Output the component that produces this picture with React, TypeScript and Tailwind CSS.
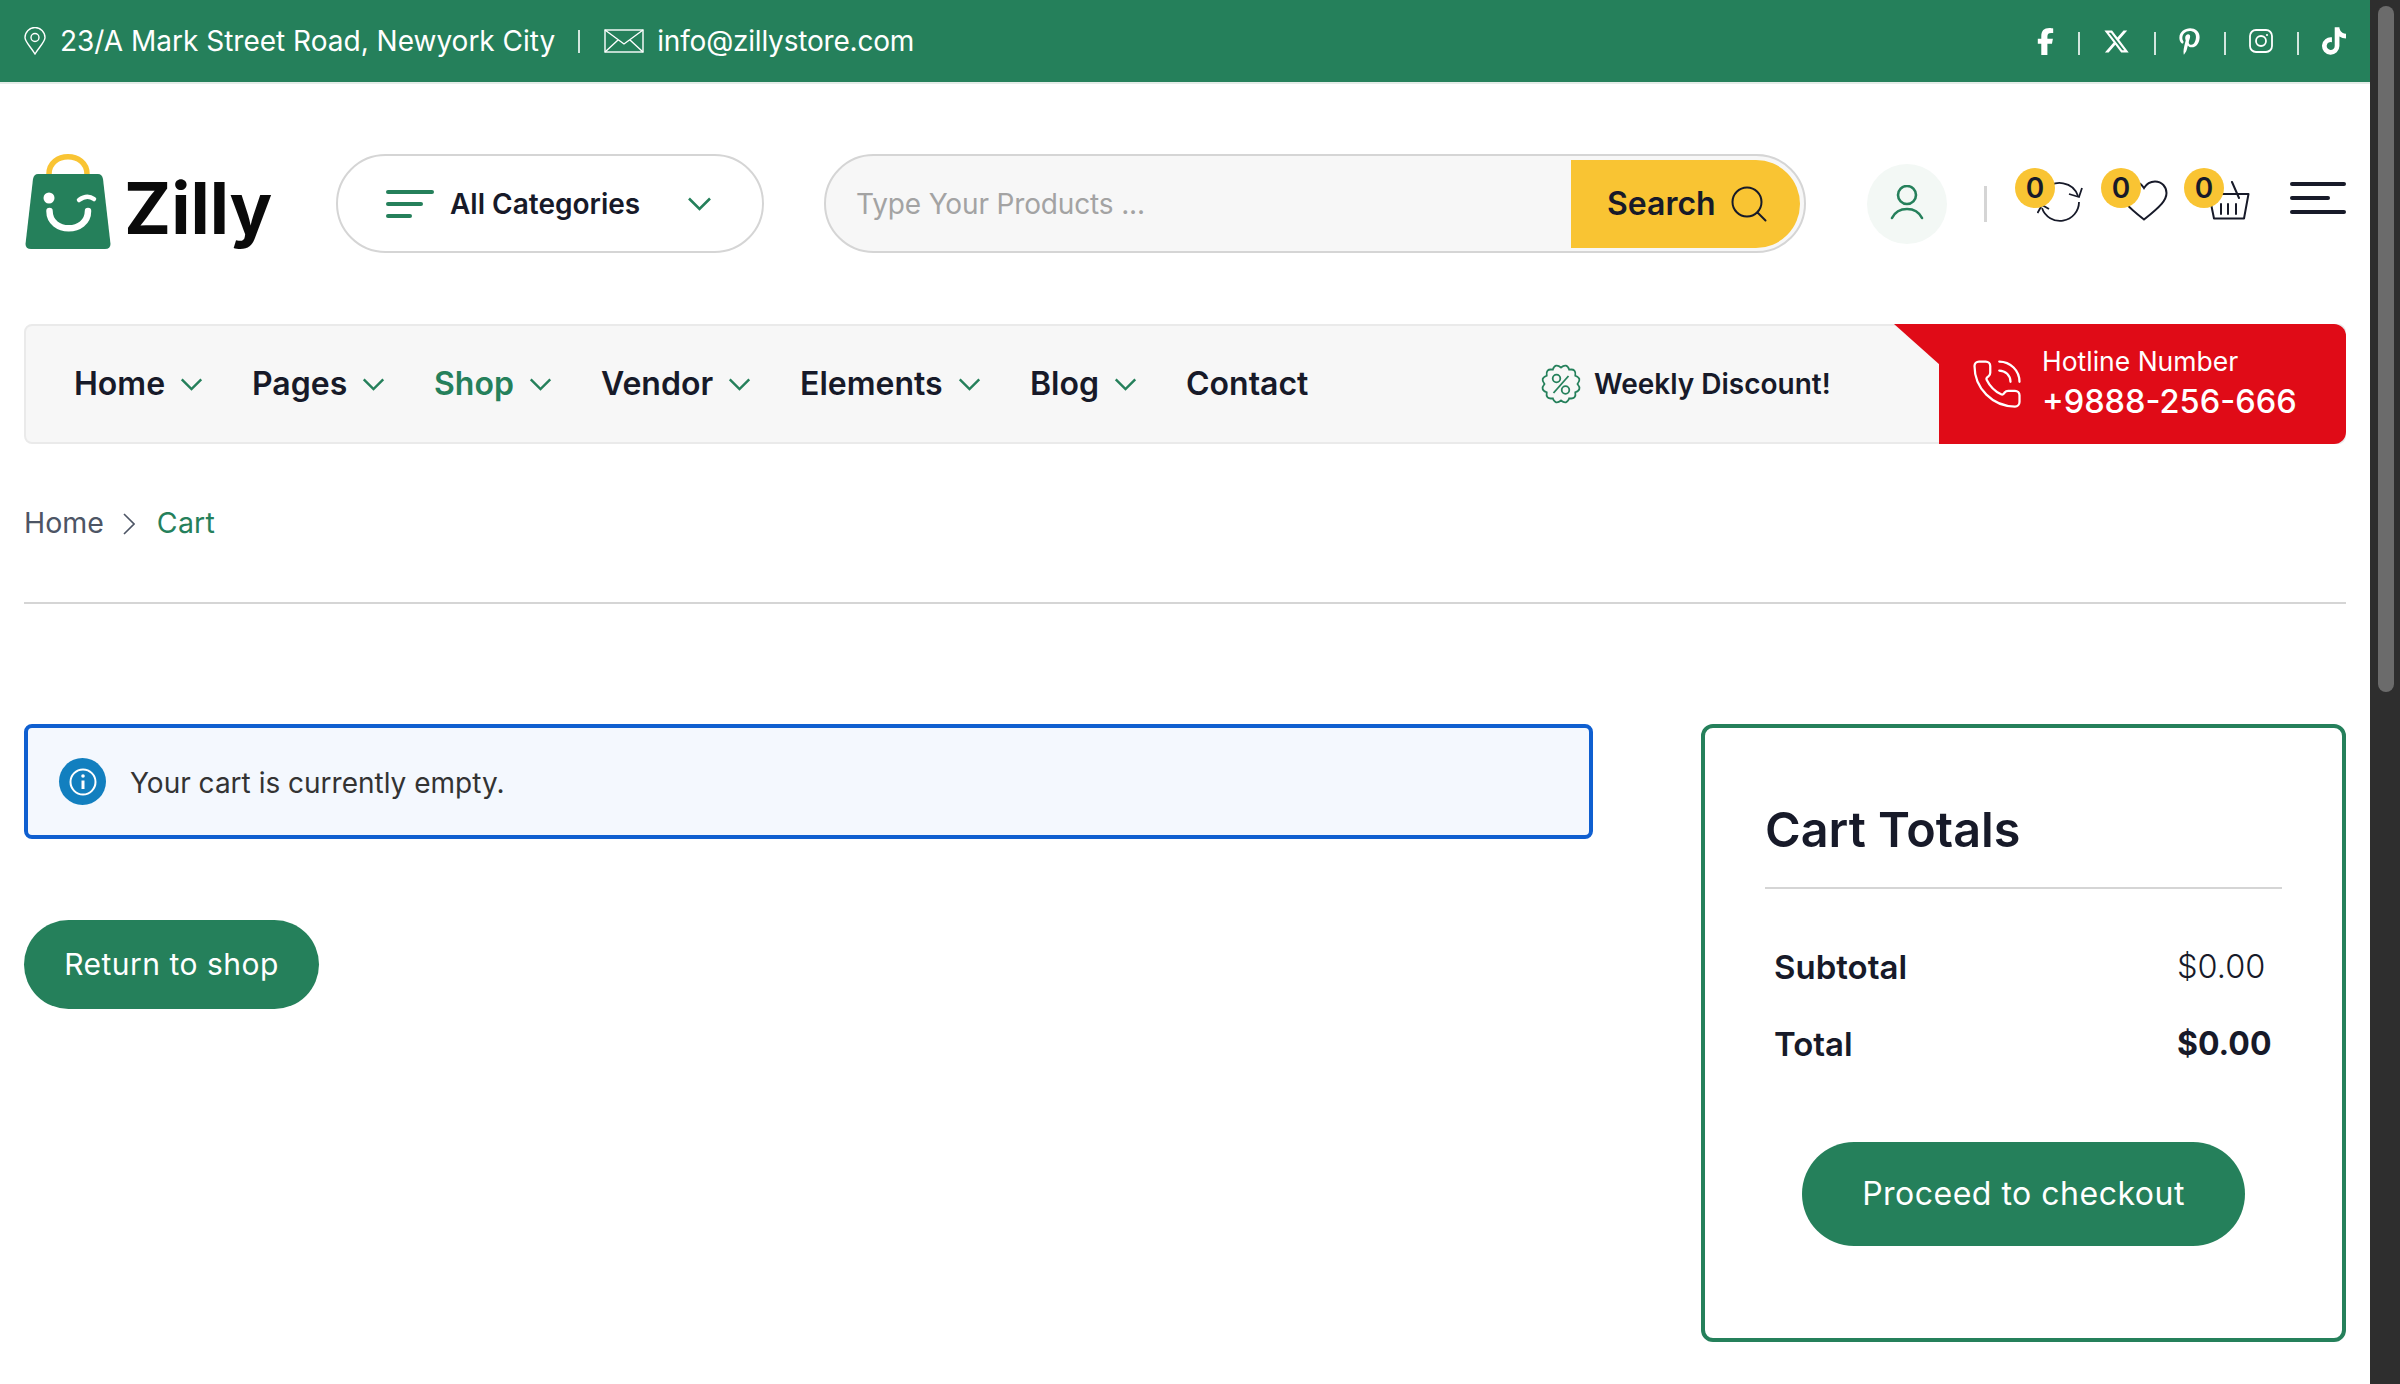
import { PhoneCall } from "lucide-react";
import { FaFacebookF, FaPinterestP, FaTiktok, FaXTwitter } from "react-icons/fa6";

function Chevron({ className = "" }: { className?: string }) {
  return (
    <svg viewBox="0 0 24 14" fill="none" stroke="currentColor" strokeWidth="2.6" className={className}>
      <polyline points="1.5,1.5 12,12 22.5,1.5" />
    </svg>
  );
}

function Sep() {
  return <span className="h-[23px] w-[2px] bg-white/80 mt-[4px]" />;
}

function TopBar() {
  return (
    <div className="h-[84px] border-b-2 border-[#e4ece8] bg-[#25805b] pl-[24px] flex items-center justify-between text-white text-[28px]">
      <div className="flex items-center">
        <svg viewBox="0 0 22 28" fill="none" stroke="currentColor" strokeWidth="1.4" className="w-[22px] h-[28px]">
          <path d="M11 27 C7 20 1 15 1 10.5 A10 10 0 0 1 21 10.5 C21 15 15 20 11 27Z" />
          <circle cx="11" cy="10.5" r="4" />
        </svg>
        <span className="ml-[14px]">23/A Mark Street Road, Newyork City</span>
        <span className="h-[23px] w-[2px] bg-white/80 ml-[23px]" />
        <svg viewBox="0 0 40 24" fill="none" stroke="currentColor" strokeWidth="1.4" className="w-[40px] h-[24px] ml-[24px]">
          <rect x="1" y="1" width="38" height="22" />
          <path d="M1 1 L20 15 L39 1 M1 23 L14 11 M39 23 L26 11" />
        </svg>
        <span className="ml-[13px] tracking-[-0.2px]">info@zillystore.com</span>
      </div>
      <div className="flex items-center gap-[23.5px] pr-[24px]">
        <FaFacebookF className="w-[17px] h-[27px]" />
        <Sep />
        <FaXTwitter className="w-[27px] h-[27px]" />
        <Sep />
        <FaPinterestP className="w-[21px] h-[27px]" />
        <Sep />
        <svg viewBox="0 0 24 24" fill="none" stroke="currentColor" strokeWidth="1.8" className="w-[24px] h-[24px]">
          <rect x="1" y="1" width="22" height="22" rx="6" />
          <circle cx="12" cy="12" r="5" />
          <circle cx="18" cy="6" r="1.1" fill="currentColor" stroke="none" />
        </svg>
        <Sep />
        <FaTiktok className="w-[24px] h-[28px]" />
      </div>
    </div>
  );
}

function Logo() {
  return (
    <div className="flex items-start w-[310px]">
      <svg viewBox="0 0 86 96" className="w-[86px] h-[96px] shrink-0 ml-[1px]">
        <path d="M24 21 V20 C24 -3 62 -3 62 20 V21" fill="none" stroke="#f9c433" strokeWidth="5.5" strokeLinecap="round" />
        <path d="M13 20 H73 Q77 20 78 25 L85.5 90 Q85.5 95 80 95 H6 Q0.5 95 0.5 90 L8 25 Q9 20 13 20Z" fill="#25805b" />
        <circle cx="24" cy="44" r="5.5" fill="#fff" />
        <path d="M54 46 Q62 40 69 45" fill="none" stroke="#fff" strokeWidth="4.5" strokeLinecap="round" />
        <path d="M24.5 57 C24.5 80 63 80 63 57" fill="none" stroke="#fff" strokeWidth="6.5" strokeLinecap="round" />
      </svg>
      <span className="ml-[13px] mt-[12px] text-[71px] leading-[84px] font-bold text-[#0a0a0a]">Zilly</span>
    </div>
  );
}

function CountBadge() {
  return (
    <span className="absolute left-0 top-0 flex h-[40px] w-[40px] items-center justify-center rounded-full bg-[#f9c433] text-[28px] font-semibold text-[#171a29]">
      0
    </span>
  );
}

function HeaderActions() {
  return (
    <div className="flex items-start ml-[61px]">
      <div className="w-[80px] h-[80px] rounded-full bg-[#f3f8f5] flex items-center justify-center mt-[10px]">
        <svg viewBox="0 0 36 38" fill="none" stroke="#25805b" strokeWidth="2.6" strokeLinecap="round" className="w-[36px] h-[38px]">
          <circle cx="18" cy="10" r="9" />
          <path d="M3 33 C9 21 27 21 33 33" />
        </svg>
      </div>
      <span className="w-[3px] h-[36px] bg-[#d5d5d5] ml-[37px] mt-[32px]" />
      <div className="relative w-[68px] h-[56px] ml-[28px] mt-[14px]">
        <svg viewBox="0 0 46 40" fill="none" stroke="#171a29" strokeWidth="1.8" className="absolute left-[22px] top-[14px] w-[46px] h-[40px]">
          <path d="M8 8.3 A19 19 0 0 1 41 14" />
          <path d="M45 6 L42 15 L32 12" />
          <path d="M42 20 A19 19 0 0 1 5 26" />
          <path d="M0.5 31 L5 23 L12 27" />
        </svg>
        <CountBadge />
      </div>
      <div className="relative w-[66px] h-[56px] ml-[18px] mt-[14px]">
        <svg viewBox="0 0 48 42" fill="none" stroke="#171a29" strokeWidth="2" className="absolute left-[19px] top-[12px] w-[48px] h-[42px]">
          <path d="M24 8 C27 3 31 1.5 35 1.5 C42 1.5 46.5 7 46.5 13 C46.5 20 41 26 24 39.5 C7 26 1.5 20 1.5 13 C1.5 7 6 1.5 13 1.5 C17 1.5 21 3 24 8Z" />
        </svg>
        <CountBadge />
      </div>
      <div className="relative w-[65px] h-[56px] ml-[17px] mt-[14px]">
        <svg viewBox="0 0 42 40" fill="none" stroke="#171a29" strokeWidth="2" strokeLinecap="round" strokeLinejoin="round" className="absolute left-[24px] top-[13px] w-[42px] h-[40px]">
          <path d="M1 13 H40.5 L36 37.5 H6 Z" />
          <path d="M24 1 L31 17" />
          <path d="M13 23 V33 M20 23 V33 M28 23 V33" />
        </svg>
        <CountBadge />
      </div>
      <div className="ml-[41px] mt-[28px] w-[56px] flex flex-col gap-[10px]">
        <span className="h-[4px] w-full rounded-full bg-[#171a29]" />
        <span className="h-[4px] w-[40px] rounded-full bg-[#171a29]" />
        <span className="h-[4px] w-full rounded-full bg-[#171a29]" />
      </div>
    </div>
  );
}

function Header() {
  return (
    <div className="h-[240px] pl-[24px] pt-[70px] flex items-start">
      <Logo />
      <div className="w-[428px] h-[99px] ml-[2px] rounded-full border-2 border-[#d5d5d5] flex items-center pl-[48px] text-[#171a29]">
        <svg viewBox="0 0 48 28" className="w-[48px] h-[28px]" fill="#25805b">
          <rect y="0" width="48" height="4" rx="2" />
          <rect y="12" width="37" height="4" rx="2" />
          <rect y="24" width="26" height="4" rx="2" />
        </svg>
        <span className="ml-[16px] text-[28px] font-semibold">All Categories</span>
        <Chevron className="w-[25px] h-[14px] ml-[47px] text-[#25805b]" />
      </div>
      <div className="w-[982px] h-[99px] ml-[60px] rounded-full border-2 border-[#d5d5d5] bg-[#f7f7f7] flex items-center justify-between pl-[30px] pr-[4px]">
        <span className="text-[28px] tracking-[-0.15px] text-[#a3a3a3]">Type Your Products ...</span>
        <div className="w-[229px] h-[88px] rounded-r-full bg-[#f9c433] flex items-center pl-[36px] text-[#171a29]">
          <span className="text-[32px] font-semibold">Search</span>
          <svg viewBox="0 0 36 36" fill="none" stroke="currentColor" strokeWidth="2" className="w-[36px] h-[36px] ml-[15px]">
            <circle cx="16" cy="16" r="14.5" />
            <path d="M26.5 26.5 L34.5 34.5" strokeLinecap="round" />
          </svg>
        </div>
      </div>
      <HeaderActions />
    </div>
  );
}

const navItems = [
  { label: "Home", width: "w-[178px]" },
  { label: "Pages", width: "w-[182px]" },
  { label: "Shop", width: "w-[167px]", active: true },
  { label: "Vendor", width: "w-[199px]" },
  { label: "Elements", width: "w-[230px]" },
  { label: "Blog", width: "w-[156px]" },
];

// scalloped outline of the discount badge
function scallopPath() {
  const point = (r: number, a: number) =>
    `${(20 + r * Math.cos(a)).toFixed(2)} ${(20 + r * Math.sin(a)).toFixed(2)}`;
  const step = (Math.PI * 2) / 12;
  let d = `M${point(16.5, 0)}`;
  for (let i = 0; i < 12; i++) {
    d += ` Q${point(22, step * (i + 0.5))} ${point(16.5, step * (i + 1))}`;
  }
  return d + "Z";
}

function DiscountIcon() {
  return (
    <svg viewBox="0 0 40 40" fill="none" stroke="#25805b" strokeWidth="1.8" className="w-[40px] h-[40px]">
      <path d={scallopPath()} />
      <circle cx="15.5" cy="14.5" r="3.8" />
      <circle cx="24.5" cy="26" r="3.8" />
      <path d="M12.5 29 L27.5 12" />
    </svg>
  );
}

function NavBar() {
  return (
    <div className="relative mx-[24px] h-[120px] rounded-[8px] border-2 border-[#eaeaea] bg-[#f7f7f7] flex items-center text-[#171a29]">
      <div className="flex items-center pl-[48px] text-[32px] font-semibold w-[1515px]">
        {navItems.map((item) => (
          <div key={item.label} className={`${item.width} flex items-center gap-[15px] ${item.active ? "text-[#25805b]" : ""}`}>
            <span>{item.label}</span>
            <Chevron className="w-[23px] h-[13px] text-[#25805b]" />
          </div>
        ))}
        <span>Contact</span>
      </div>
      <DiscountIcon />
      <span className="ml-[13px] text-[28px] font-semibold">Weekly Discount!</span>
      <div className="absolute -top-[2px] -bottom-[2px] -right-[2px] w-[407px] rounded-r-[12px] bg-[#e00b17] flex items-center pl-[31px] text-white">
        <div className="absolute -left-[45px] top-0 w-[46px] h-[41px] bg-[#e00b17] [clip-path:polygon(0_0,100%_0,100%_100%)]" />
        <PhoneCall className="w-[54px] h-[54px]" strokeWidth={1} />
        <div className="ml-[18px] -mt-[2px]">
          <div className="text-[26.5px] leading-[38px]">Hotline Number</div>
          <div className="text-[32.5px] leading-[44px] font-medium">+9888-256-666</div>
        </div>
      </div>
    </div>
  );
}

function Breadcrumb() {
  return (
    <div className="mx-[24px] h-[160px] border-b-2 border-[#d5d5d5] pt-[58px] flex items-start text-[28.5px]">
      <span className="text-[#4d5565]">Home</span>
      <svg viewBox="0 0 12 22" fill="none" stroke="#4d5565" strokeWidth="1.6" className="w-[12px] h-[22px] ml-[19px] mt-[11px]">
        <polyline points="1,1 11,11 1,21" />
      </svg>
      <span className="ml-[22px] text-[#25805b] tracking-[0.2px]">Cart</span>
    </div>
  );
}

function CartNotice() {
  return (
    <div className="w-[1569px]">
      <div className="h-[115px] rounded-[8px] border-[4px] border-[#0f5fd0] bg-[#f4f8fe] flex items-center pl-[31px]">
        <span className="w-[47px] h-[47px] rounded-full bg-[#127fbf] flex items-center justify-center">
          <svg viewBox="0 0 28 28" fill="none" stroke="#fff" className="w-[28px] h-[28px]">
            <circle cx="14" cy="14" r="12.5" strokeWidth="2" />
            <path d="M14 12.5 V21" strokeWidth="3" />
            <circle cx="14" cy="8" r="1.8" fill="#fff" stroke="none" />
          </svg>
        </span>
        <span className="ml-[24px] mt-[2px] text-[28px] text-[#333]">Your cart is currently empty.</span>
      </div>
      <button className="mt-[81px] w-[295px] h-[89px] rounded-full bg-[#25805b] text-white text-[30px] tracking-[0.5px]">
        Return to shop
      </button>
    </div>
  );
}

function CartTotals() {
  return (
    <div className="w-[645px] h-[618px] rounded-[12px] border-[4px] border-[#25805b] px-[60px] pt-[72px] text-[#171a29]">
      <h2 className="text-[48.5px] leading-[60px] font-semibold pb-[27px] border-b-2 border-[#d5d5d5]">Cart Totals</h2>
      <div className="mt-[55px] pl-[9px] flex items-center justify-between text-[33px] leading-[46px]">
        <span className="font-semibold">Subtotal</span>
        <span className="w-[105px] text-[32.5px] font-light">$0.00</span>
      </div>
      <div className="mt-[31px] pl-[9px] flex items-center justify-between text-[33px] leading-[46px] font-bold">
        <span className="font-semibold">Total</span>
        <span className="w-[105px] text-[32px]">$0.00</span>
      </div>
      <button className="block mx-auto mt-[75px] w-[443px] h-[104px] rounded-full bg-[#25805b] text-white text-[32px] tracking-[0.5px]">
        Proceed to checkout
      </button>
    </div>
  );
}

export default function App() {
  return (
    <div className="flex h-screen overflow-hidden bg-white font-[Inter,sans-serif]">
      <div className="flex-1 min-w-0">
        <TopBar />
        <Header />
        <NavBar />
        <Breadcrumb />
        <div className="mx-[24px] mt-[120px] flex justify-between">
          <CartNotice />
          <CartTotals />
        </div>
      </div>
      <div className="w-[30px] shrink-0 bg-[#2e2e2e] pl-[8px] pt-[6px]">
        <div className="w-[16px] h-[686px] rounded-full bg-[#6b6b6b]" />
      </div>
    </div>
  );
}
